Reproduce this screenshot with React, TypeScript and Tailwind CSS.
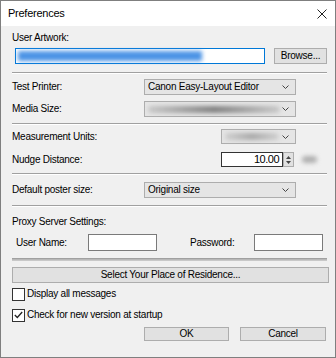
import cx from "clsx"

function Chevron() {
  return (
    <svg width="7" height="4" viewBox="0 0 7 4" className="shrink-0">
      <polyline points="0.5,0.5 3.5,3.5 6.5,0.5" fill="none" stroke="#444" strokeWidth="1" />
    </svg>
  )
}

function Combo({ className, children }: { className?: string; children?: React.ReactNode }) {
  return (
    <div
      className={cx(
        "flex h-full items-center border border-[#adadad] bg-[#e5e5e5] pl-[3px] pr-[6px]",
        className,
      )}
    >
      <div className="flex min-w-0 flex-1 items-center whitespace-nowrap">{children}</div>
      <Chevron />
    </div>
  )
}

function Blur({ className }: { className: string }) {
  return <div className={cx("rounded-full blur-[2px]", className)} />
}

function Separator() {
  return <div className="h-[2px] w-[315px] border-t border-b border-t-[#a0a0a0] border-b-white" />
}

function Button({ className, children }: { className?: string; children: React.ReactNode }) {
  return (
    <div
      className={cx(
        "flex items-center justify-center border border-[#adadad] bg-[#e1e1e1] leading-none",
        className,
      )}
    >
      {children}
    </div>
  )
}

function Checkbox({ checked, label }: { checked?: boolean; label: string }) {
  return (
    <div className="flex h-[14px] items-center">
      <div className="flex h-[13px] w-[13px] items-center justify-center border border-[#333] bg-white">
        {checked && (
          <svg width="9" height="8" viewBox="0 0 9 8">
            <polyline points="0.8,4 3.3,6.5 8.2,1" fill="none" stroke="#222" strokeWidth="1.3" />
          </svg>
        )}
      </div>
      <span className="ml-[2px]">{label}</span>
    </div>
  )
}

export default function App() {
  return (
    <div className="flex h-[358px] w-[336px] flex-col border border-[#7f7f7f] bg-[#f0f0f0] font-['Liberation_Sans',Arial,sans-serif] text-[10px] leading-none tracking-[-0.25px] text-black">
      {/* Title bar */}
      <div className="flex h-[25px] shrink-0 items-center justify-between bg-white pl-[7px] pr-[8px]">
        <span className="text-[11px]">Preferences</span>
        <svg width="10" height="10" viewBox="0 0 10 10">
          <path d="M0.5 0.5 L9.5 9.5 M9.5 0.5 L0.5 9.5" stroke="#222" strokeWidth="1" />
        </svg>
      </div>

      <div className="flex flex-col pl-[11px]">
        {/* User Artwork */}
        <div className="mt-[5px] flex h-[14px] items-center">User Artwork:</div>
        <div className="mt-[3px] flex h-[16px] items-stretch pl-[3px]">
          <div className="flex w-[250px] items-center border border-[#0078d7] bg-white px-[2px]">
            <Blur className="h-[10px] w-[184px] rounded-none bg-[#4d94e6]" />
          </div>
          <Button className="ml-[9px] w-[53px]">Browse...</Button>
        </div>

        <div className="mt-[8px]">
          <Separator />
        </div>

        {/* Printer */}
        <div className="mt-[5px] flex h-[16px] items-center">
          <span className="w-[132px]">Test Printer:</span>
          <Combo className="w-[152px]">
            <span>Canon Easy-Layout Editor</span>
          </Combo>
        </div>
        <div className="mt-[6px] flex h-[16px] items-center">
          <span className="w-[132px]">Media Size:</span>
          <Combo className="w-[152px]">
            <Blur className="h-[7px] w-[132px] bg-gradient-to-r from-[#c8c8c8] via-[#808080] to-[#c8c8c8]" />
          </Combo>
        </div>

        <div className="mt-[6px]">
          <Separator />
        </div>

        {/* Units */}
        <div className="mt-[4px] flex h-[15px] items-center">
          <span className="w-[209px]">Measurement Units:</span>
          <Combo className="w-[75px]">
            <Blur className="h-[7px] w-[54px] bg-gradient-to-r from-[#cfcfcf] via-[#a8a8a8] to-[#cfcfcf]" />
          </Combo>
        </div>
        <div className="mt-[8px] flex h-[15px] items-center">
          <span className="w-[209px]">Nudge Distance:</span>
          <div className="flex h-full w-[62px] items-center justify-end border border-[#333] bg-white pr-[3px] text-[11px] tracking-[-0.5px]">
            10.00
          </div>
          <div className="flex h-full w-[11px] flex-col items-center justify-center gap-[2px] border border-[#adadad] bg-[#e1e1e1]">
            <svg width="5" height="3" viewBox="0 0 5 3">
              <polygon points="0,3 2.5,0 5,3" fill="#444" />
            </svg>
            <svg width="5" height="3" viewBox="0 0 5 3">
              <polygon points="0,0 2.5,3 5,0" fill="#444" />
            </svg>
          </div>
          <Blur className="ml-[8px] h-[7px] w-[15px] rounded-sm bg-[#b0b0b0]" />
        </div>

        <div className="mt-[6px]">
          <Separator />
        </div>

        {/* Poster */}
        <div className="mt-[7px] flex h-[16px] items-center">
          <span className="w-[132px]">Default poster size:</span>
          <Combo className="w-[152px]">
            <span>Original size</span>
          </Combo>
        </div>

        <div className="mt-[7px]">
          <Separator />
        </div>

        {/* Proxy */}
        <div className="mt-[8px] flex h-[14px] items-center">Proxy Server Settings:</div>
        <div className="mt-[5px] flex h-[17px] items-center pl-[4px]">
          <span className="w-[72px]">User Name:</span>
          <div className="h-full w-[69px] border border-[#7a7a7a] bg-white" />
          <span className="ml-[33px] w-[64px]">Password:</span>
          <div className="h-full w-[69px] border border-[#7a7a7a] bg-white" />
        </div>

        <div className="mt-[7px] h-[3px] w-[315px] border-t border-b border-t-[#a0a0a0] border-b-[#c8c8c8] bg-[#b8b8b8]" />

        <Button className="mt-[6px] h-[16px] w-[317px]">Select Your Place of Residence...</Button>

        <div className="mt-[4px]">
          <Checkbox label="Display all messages" />
        </div>
        <div className="mt-[7px]">
          <Checkbox checked label="Check for new version at startup" />
        </div>

        {/* Footer */}
        <div className="mt-[5px] flex h-[14px] pl-[132px]">
          <Button className="w-[85px] border-[#0078d7]">OK</Button>
          <Button className="ml-[11px] w-[86px]">Cancel</Button>
        </div>
      </div>
    </div>
  )
}
